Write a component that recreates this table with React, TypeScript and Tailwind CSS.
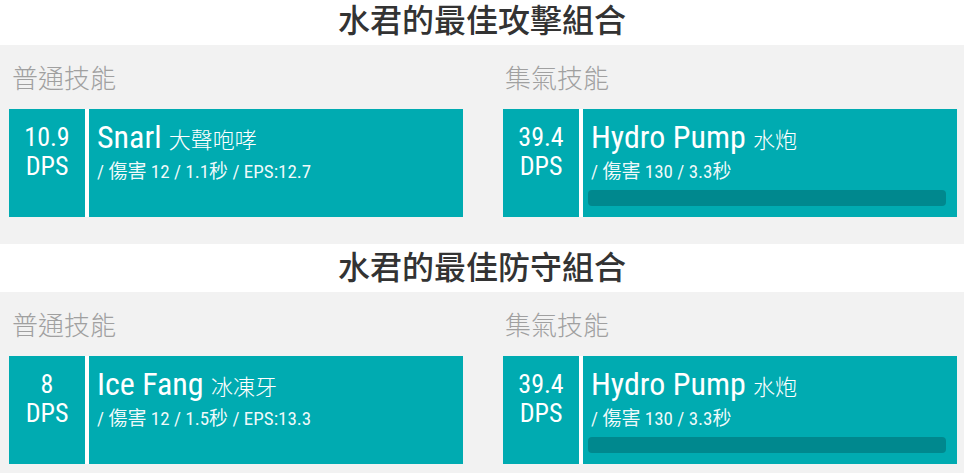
import React from "react"

type Move = {
    dps: string
    en: string
    zh: string
    detail: string
    charge?: boolean
}

type Combo = {
    title: string
    fast: Move
    charge: Move
}

const hydroPump: Move = { dps: "39.4", en: "Hydro Pump", zh: "水炮", detail: "/ 傷害 130 / 3.3秒", charge: true }

const combos: Combo[] = [
    {
        title: "水君的最佳攻擊組合",
        fast: { dps: "10.9", en: "Snarl", zh: "大聲咆哮", detail: "/ 傷害 12 / 1.1秒 / EPS:12.7" },
        charge: hydroPump,
    },
    {
        title: "水君的最佳防守組合",
        fast: { dps: "8", en: "Ice Fang", zh: "冰凍牙", detail: "/ 傷害 12 / 1.5秒 / EPS:13.3" },
        charge: hydroPump,
    },
]

const fontStack = "font-['Roboto_Condensed',Roboto,'Noto_Sans_CJK_TC',sans-serif]"

const MoveCard = ({ move }: { move: Move }) => {
    return <div className="flex h-[108px] bg-white">
        {/* dps box */}
        <div className="w-[76px] shrink-0 bg-[#00abb1] pt-[14px] text-center text-[26px] leading-[29px] text-white">
            <div>{move.dps}</div>
            <div>DPS</div>
        </div>

        {/* move info */}
        <div className="ml-[4px] flex-1 bg-[#00abb1] pt-[10px] text-white">
            <div className="pl-[8px] text-[32px] leading-[36px] whitespace-nowrap">
                {move.en} <span className="text-[22px] font-light">{move.zh}</span>
            </div>
            <div className="pl-[8px] mt-[1px] text-[19px] leading-[24px] text-white/95 whitespace-nowrap">
                {move.detail}
            </div>
            {move.charge && <div className="ml-[5px] mr-[11px] mt-[6px] h-[16px] rounded-[4px] bg-[#00888e]" />}
        </div>
    </div>
}

const ComboSection = ({ combo, first }: { combo: Combo, first: boolean }) => {
    return <section>
        <h2 className={`${first ? "h-[45px] pb-[3px]" : "h-[48px]"} flex items-center justify-center bg-white text-[32px] font-medium text-[#333]`}>
            {combo.title}
        </h2>

        <div className="grid grid-cols-2 gap-[40px] bg-[#f2f2f2] pl-[9px] pr-[7px] pt-[18px] pb-[27px]">
            <div>
                <div className="pl-[3px] mb-[14px] h-[32px] text-[26px] leading-[32px] font-light text-[#a0a0a0]">普通技能</div>
                <MoveCard move={combo.fast} />
            </div>
            <div>
                <div className="pl-[2px] mb-[14px] h-[32px] text-[26px] leading-[32px] font-light text-[#a0a0a0]">集氣技能</div>
                <MoveCard move={combo.charge} />
            </div>
        </div>
    </section>
}

export default function App() {
    return <div className={`${fontStack} w-[964px] h-[473px] overflow-hidden bg-[#f2f2f2]`}>
        {combos.map((combo, i) => <ComboSection key={combo.title} combo={combo} first={i === 0} />)}
    </div>
}
